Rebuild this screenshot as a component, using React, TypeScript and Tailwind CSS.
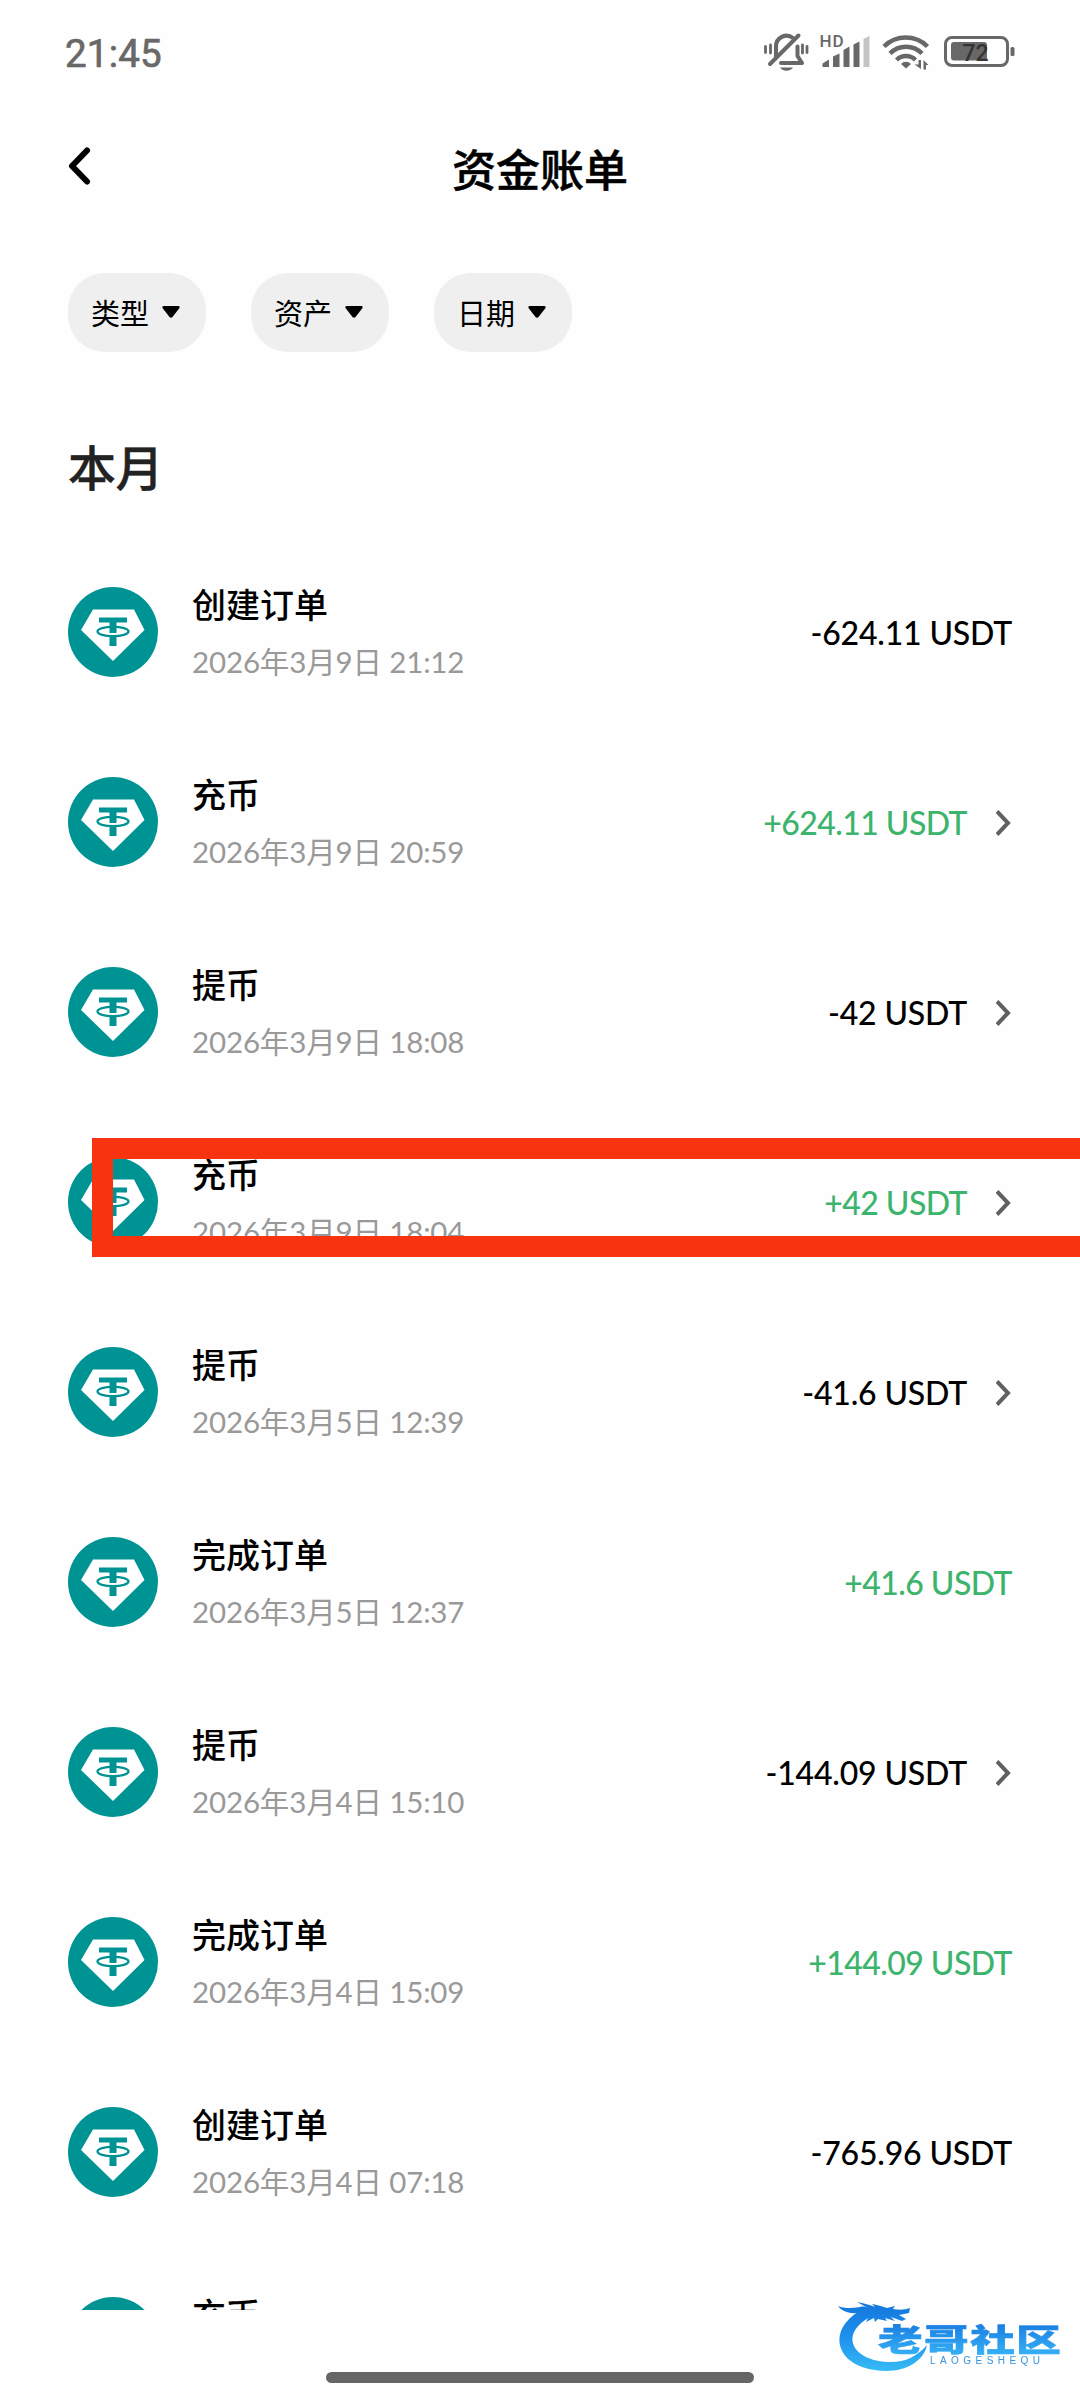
import React from 'react';

interface Entry {
    title: string;
    date: string;
    amount: string;
    link?: boolean;
}

const entries: Entry[] = [
    { title: '创建订单', date: '2026年3月9日 21:12', amount: '-624.11 USDT' },
    { title: '充币', date: '2026年3月9日 20:59', amount: '+624.11 USDT', link: true },
    { title: '提币', date: '2026年3月9日 18:08', amount: '-42 USDT', link: true },
    { title: '充币', date: '2026年3月9日 18:04', amount: '+42 USDT', link: true },
    { title: '提币', date: '2026年3月5日 12:39', amount: '-41.6 USDT', link: true },
    { title: '完成订单', date: '2026年3月5日 12:37', amount: '+41.6 USDT' },
    { title: '提币', date: '2026年3月4日 15:10', amount: '-144.09 USDT', link: true },
    { title: '完成订单', date: '2026年3月4日 15:09', amount: '+144.09 USDT' },
    { title: '创建订单', date: '2026年3月4日 07:18', amount: '-765.96 USDT' },
    { title: '充币', date: '', amount: '' },
];

const filters = ['类型', '资产', '日期'];

const StatusIcons: React.FC = () => (
    <svg width="256" height="44" viewBox="760 30 256 44" fill="none" stroke="#686868">
        {/* Muted bell */}
        <g strokeWidth="4" strokeLinecap="round" strokeLinejoin="round">
            <path d="M776 57V46.500a10.500 10.500 0 0 1 17-8.500" />
            <path d="M797.500 46.500V56l4.500 7H781" />
            <path d="M770 64 798.500 35.500" />
            <path strokeWidth="2.800" d="M765.500 46.500v6M770.500 45v8M802.500 45v8M807 46.500v6" />
        </g>
        <path fill="#686868" stroke="none" d="M780 67.500h13a7 5 0 0 1-13 0z" />
        {/* Mobile signal */}
        <text x="819.500" y="47" textLength="24" fill="#686868" stroke="none" className="font-[Roboto] text-[17px] font-medium">HD</text>
        <g fill="#686868" stroke="none">
            <path d="M822.500 67v-3.500l6.500-4V67z M833 67V56.500l6.500-3V67z M843.500 67V50l6-3.500V67z M853.500 67V44.500l6-3V67z" />
            <path fill="#c4c4c4" d="M863.500 67V39l6-3V67z" />
        </g>
        {/* Wifi */}
        <g strokeWidth="4.500">
            <path d="M884 46.500a31 31 0 0 1 43.500 0" />
            <path d="M890 53.500a22.500 22.500 0 0 1 32 0" />
            <path d="M896.500 60a13.500 13.500 0 0 1 19 0" />
        </g>
        <path fill="#686868" stroke="none" d="M901 64a6.500 6.500 0 0 1 10 0l-5 4.500z" />
        <path fill="#686868" stroke="none" d="M918.500 60h2.500v9l-6.500-4.500h4zM923.500 69.500h2.500v-4.500h2.500l-5-5z" />
        {/* Battery */}
        <rect x="945.500" y="37.500" width="62" height="28" rx="6.500" strokeWidth="3" />
        <rect x="951" y="42" width="36" height="18.500" rx="3" fill="#686868" stroke="none" />
        <rect x="1010.500" y="47" width="4" height="9" rx="1.500" fill="#686868" stroke="none" />
        <text x="962.500" y="60.500" fill="#333" stroke="none" className="font-[Roboto] text-[23px] font-medium">72</text>
    </svg>
);

const TetherIcon: React.FC = () => (
    <svg className="shrink-0" width="90" height="90" viewBox="0 0 90 90">
        <circle cx="45" cy="45" r="45" fill="#009393" />
        <path fill="#fff" d="M25 22.500H66L76.500 43 45 74 13 43z" />
        <path fill="#009393" d="M31 30.500h28v5H48.500v10.500h-7v-10.500H31zM41.500 50h7v9h-7z" />
        <ellipse cx="45" cy="44.500" rx="15.500" ry="4.700" fill="none" stroke="#009393" strokeWidth="2.300" />
    </svg>
);

const EntryRow: React.FC<{ entry: Entry }> = ({ entry }) => (
    <div className="flex h-[190px] shrink-0 items-start">
        <TetherIcon />
        <div className="ml-[34px] flex flex-1 flex-col">
            <span className="-mt-1 h-[44px] text-[34px] leading-[44px] font-medium">{entry.title}</span>
            <span className="mt-[13px] h-[44px] text-[29.500px] leading-[44px] tracking-[-0.15px] whitespace-nowrap text-[#999]">{entry.date}</span>
        </div>
        <div className="flex h-[92px] items-center">
            <span className={`text-[32px] font-medium whitespace-nowrap ${entry.amount.startsWith('+') ? 'tracking-[-0.55px] text-[#3db46d]' : 'tracking-[-0.18px] text-black'}`}>
                {entry.amount}
            </span>
            {entry.link && (
                <svg className="mb-px ml-[29px]" width="16" height="28" viewBox="0 0 16 28" fill="none" stroke="#606060" strokeWidth="4">
                    <path d="M1 2.500 12 14 1 25.500" />
                </svg>
            )}
        </div>
    </div>
);

const Watermark: React.FC = () => (
    <svg className="blur-[0.5px]" width="232" height="80" viewBox="834 2292 232 80">
        <defs>
            <linearGradient id="wm" gradientUnits="userSpaceOnUse" x1="0" y1="2304" x2="0" y2="2370">
                <stop offset="0" stopColor="#1478dc" />
                <stop offset="0.500" stopColor="#1e90ee" />
                <stop offset="1" stopColor="#35baf5" />
            </linearGradient>
            {/* Runs in the wordmark's own coordinates, baseline at 0 */}
            <linearGradient id="wmText" gradientUnits="userSpaceOnUse" x1="0" y1="-26" x2="0" y2="3">
                <stop offset="0" stopColor="#1a7fe2" />
                <stop offset="1" stopColor="#35aef5" />
            </linearGradient>
        </defs>
        <g fill="url(#wm)">
            {/* Dragon body, then head and whiskers */}
            <path d="M864 2309C826 2326 831 2370 886 2371 908 2371 924 2360 927 2345 917 2357 903 2363 888 2362 850 2360 838 2332 874 2315z" />
            <path d="M838 2306c7 3 15 2 22 1 3-1 6 0 8 1l-11-6c7 1 13 3 18 5l-3-3c7 1 11 3 15 4l8-2-2 3c7 1 11 1 17-1l-1 5-10 2 7 4-4 2-11-4 4 4-10-3 2 3-9-2-3 3-1-4-8 4 3-6-11 4 4-7c-9 1-19 0-24-7z" />
        </g>
        <text transform="translate(878 2350.500) scale(1.440 1)" x="0" y="0" textLength="127" fill="url(#wmText)" stroke="url(#wmText)" strokeWidth="0.600" className="text-[31px] font-black">老哥社区</text>
        <text x="930" y="2363.500" textLength="110" fill="#3b93da" className="font-['Liberation_Sans'] text-[10px]">LAOGESHEQU</text>
    </svg>
);

export default function App() {
    return (
        <div className="relative flex h-[2400px] w-[1080px] flex-col overflow-hidden bg-[#fefefe] font-[Lato,'Noto_Sans_CJK_SC',sans-serif] text-black">

            {/* Status bar */}
            <div className="flex h-[106px] items-start justify-between pt-[30px] pr-[64px] pl-[65px]">
                <span className="font-[Roboto] text-[38.500px] leading-[48px] tracking-[0.2px] text-[#686868] [-webkit-text-stroke:0.7px_#686868]">21:45</span>
                <StatusIcons />
            </div>

            {/* Header */}
            <header className="flex h-[126px] items-center justify-between px-[68px]">
                <svg className="mb-[6px]" width="24" height="40" viewBox="0 0 24 40" fill="none" stroke="#000" strokeWidth="6" strokeLinecap="round" strokeLinejoin="round">
                    <path d="M19 4.500 4 20 19 35.500" />
                </svg>
                <h1 className="pt-px text-[44px] font-medium [-webkit-text-stroke:0.5px_#000]">资金账单</h1>
                <span className="w-6" />
            </header>

            {/* Filters */}
            <div className="mt-[41px] flex gap-[45px] pl-[68px]">
                {filters.map((label) => (
                    <button key={label} className="flex h-[79px] w-[138px] items-center rounded-[37px] bg-[#efefef] pl-[23px] text-[29px]">
                        <span className="pt-[3px]">{label}</span>
                        <svg className="mb-[2px] ml-[12px]" width="20" height="14" viewBox="0 0 20 14">
                            <path d="M2.500 1h15q2 0.500 1 2L11.500 12q-1.500 1.500-3 0L1.500 3q-1-1.500 1-2z" />
                        </svg>
                    </button>
                ))}
            </div>

            <h2 className="mt-[82px] h-[69px] pl-[68px] text-[48px] leading-[68px] font-medium tracking-[-0.5px] text-[#222] [-webkit-text-stroke:0.4px_#222]">本月</h2>

            {/* Ledger */}
            <main className="mt-[64px] flex h-[1743px] flex-col overflow-hidden px-[68px] pt-5">
                {entries.map((entry, i) => (
                    <EntryRow key={i} entry={entry} />
                ))}
            </main>

            {/* Highlight drawn over the fourth entry */}
            <div className="absolute top-[1138px] left-[92px] h-[119px] w-[1020px] border-[21px] border-[#f73310]" />

            <div className="absolute right-[14px] bottom-[28px]">
                <Watermark />
            </div>
            <div className="absolute bottom-[17px] left-[326px] h-[11px] w-[428px] rounded-full bg-[#666]" />
        </div>
    );
}
